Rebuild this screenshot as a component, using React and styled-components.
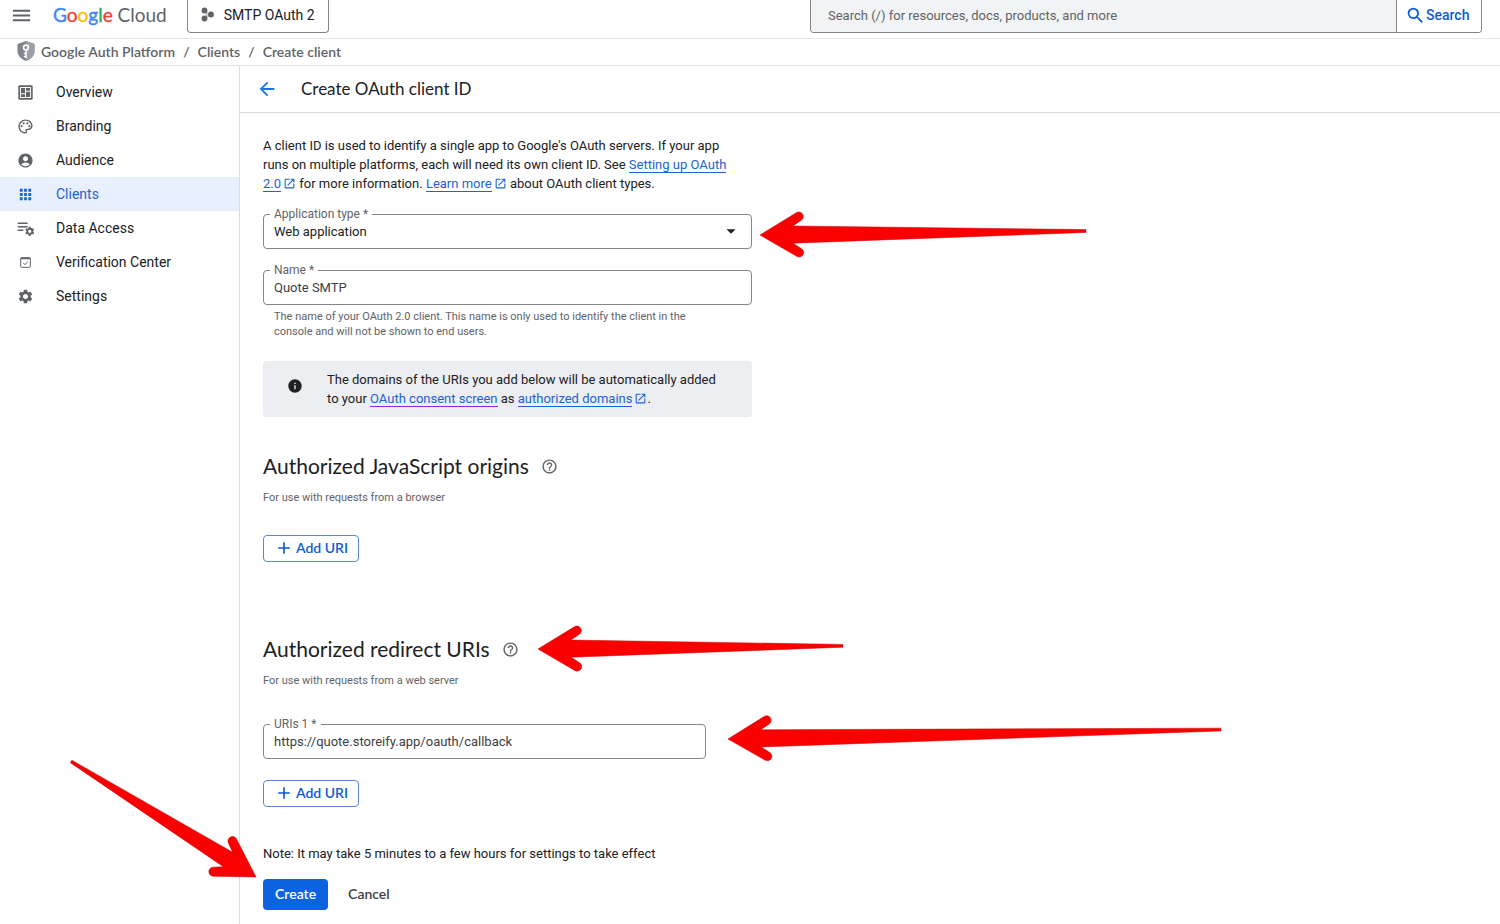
import React, { useState } from "react";
import styled, { createGlobalStyle } from "styled-components";
import {
  MdAccountCircle,
  MdAdd,
  MdApps,
  MdArrowBack,
  MdArrowDropDown,
  MdHelpOutline,
  MdInfo,
  MdMenu,
  MdOpenInNew,
  MdOutlinePalette,
  MdSearch,
  MdSettings,
} from "react-icons/md";

const bodyFont = `Roboto, "Liberation Sans", sans-serif`;
const titleFont = `Lato, Roboto, sans-serif`;

const GlobalStyle = createGlobalStyle`
  * {
    box-sizing: border-box;
  }

  body {
    margin: 0;
    background: #fff;
    color: #202124;
    font-family: ${bodyFont};
    font-size: 13px;
    line-height: 19px;
  }

  button,
  input,
  select {
    font: inherit;
    color: inherit;
  }
`;

const Page = styled.div`
  display: flex;
  flex-direction: column;
  min-height: 100vh;
  overflow: hidden;
`;

/* top bar */

const TopBar = styled.header`
  display: flex;
  align-items: flex-start;
  height: 39px;
  padding: 0 18px 0 10px;
  border-bottom: 1px solid #e4e6e9;
`;

const MenuButton = styled.button`
  display: flex;
  padding: 4px 0;
  border: none;
  background: none;
  color: #5f6368;
  font-size: 23px;
  cursor: pointer;
`;

const Logo = styled.a`
  margin-left: 20px;
  color: #5f6368;
  font-family: ${titleFont};
  font-size: 19px;
  line-height: 30px;
  text-decoration: none;
  white-space: nowrap;
`;

const LogoLetter = styled.span`
  color: ${({ $color }) => $color};
  -webkit-text-stroke: 0.4px ${({ $color }) => $color};
`;

const ProjectButton = styled.button`
  display: flex;
  align-items: center;
  gap: 8px;
  height: 33px;
  margin-left: 20px;
  padding: 0 13px 2px 12px;
  border: 1px solid #80868b;
  border-top: none;
  border-radius: 0 0 4px 4px;
  background: #fff;
  font-size: 14px;
  white-space: nowrap;
  cursor: pointer;
`;

const SearchBox = styled.form`
  display: flex;
  flex: 0 1 672px;
  height: 33px;
  margin-left: auto;
  border: 1px solid #80868b;
  border-top: none;
  border-radius: 0 0 4px 4px;
  overflow: hidden;
`;

const SearchInput = styled.input`
  flex: 1;
  min-width: 0;
  padding: 0 17px 2px;
  border: none;
  border-right: 1px solid #80868b;
  background: #f1f3f4;
  outline: none;

  &::placeholder {
    color: #5f6368;
    opacity: 1;
  }
`;

const SearchButton = styled.button`
  display: flex;
  align-items: center;
  width: 84px;
  padding: 0 0 2px 8px;
  border: none;
  background: #fff;
  color: #0f5bd2;
  font-size: 14px;
  font-weight: 500;
  cursor: pointer;

  svg {
    font-size: 21px;
  }
`;

const Breadcrumbs = styled.nav`
  display: flex;
  align-items: center;
  gap: 8px;
  height: 27px;
  padding: 0 17px 2px;
  border-bottom: 1px solid #e4e6e9;
  color: #5f6368;
  font-family: ${titleFont};
  font-size: 14px;
  font-weight: 600;

  a {
    color: inherit;
    text-decoration: none;
  }
`;

const Product = styled.a`
  display: flex;
  align-items: center;
  gap: 6px;
`;

/* side navigation */

const Columns = styled.div`
  display: flex;
  flex: 1;
`;

const Sidebar = styled.nav`
  flex: 0 0 240px;
  padding-top: 9px;
  border-right: 1px solid #dadce0;
`;

const NavItem = styled.a`
  display: flex;
  align-items: center;
  gap: 22px;
  height: 34px;
  padding-left: 17px;
  background: ${({ $active }) => ($active ? "#e8f0fe" : "transparent")};
  color: ${({ $active }) => ($active ? "#1f62d0" : "#202124")};
  font-size: 14px;
  text-decoration: none;

  svg {
    width: 17px;
    height: 17px;
    color: ${({ $active }) => ($active ? "#1f62d0" : "#5f6368")};
  }
`;

/* main column */

const Main = styled.main`
  flex: 1;
  min-width: 0;
`;

const TitleBar = styled.div`
  display: flex;
  align-items: center;
  gap: 23px;
  height: 47px;
  padding-left: 16px;
  border-bottom: 1px solid #dadce0;
`;

const BackButton = styled.button`
  display: flex;
  padding: 0;
  border: none;
  background: none;
  color: #1a73e8;
  font-size: 22px;
  cursor: pointer;
`;

const Title = styled.h1`
  margin: 0;
  font-family: ${titleFont};
  font-size: 17px;
  font-weight: 400;
  line-height: 24px;
`;

const Form = styled.form`
  max-width: 512px;
  padding: 23px 0 14px 23px;
`;

const Intro = styled.p`
  margin: 0 12px 21px 0;
`;

const Link = styled.a`
  color: #1f62d0;
  text-decoration: none;
  border-bottom: 1px solid ${({ $visited }) => ($visited ? "#8430ce" : "#1f62d0")};
`;

const ExternalIcon = styled(MdOpenInNew)`
  margin-left: 2px;
  color: #1f62d0;
  font-size: 13px;
  vertical-align: -2px;
`;

const FieldGroup = styled.div`
  display: grid;
  gap: 21px;
`;

const Field = styled.div`
  position: relative;
  width: ${({ $narrow }) => ($narrow ? "443px" : "100%")};

  input,
  select {
    display: block;
    width: 100%;
    height: 35px;
    padding: 0 10px 1px;
    border: 1px solid #80868b;
    border-radius: 4px;
    background: #fff;
    appearance: none;
    outline: none;
  }

  input {
    color: #3c4043;
  }
`;

const FieldLabel = styled.label`
  position: absolute;
  top: -8px;
  left: 7px;
  padding: 0 4px;
  background: #fff;
  color: #5f6368;
  font-size: 12px;
  line-height: 16px;
`;

const Caret = styled(MdArrowDropDown)`
  position: absolute;
  top: 6px;
  right: 10px;
  font-size: 22px;
  pointer-events: none;
`;

const Hint = styled.p`
  margin: 4px 40px 22px 11px;
  color: #5f6368;
  font-size: 11px;
  line-height: 15px;
`;

const Notice = styled.div`
  display: flex;
  gap: 24px;
  margin-bottom: 35px;
  padding: 9px 24px;
  border-radius: 4px;
  background: #eceef2;

  p {
    margin: 0;
  }

  > svg {
    flex: none;
    margin-top: 8px;
    font-size: 16px;
  }
`;

const Section = styled.section`
  margin-bottom: ${({ $last }) => ($last ? "37px" : "73px")};
`;

const SectionTitle = styled.h2`
  position: relative;
  display: flex;
  align-items: center;
  gap: 12px;
  width: fit-content;
  margin: 0;
  font-family: ${titleFont};
  font-size: 21px;
  font-weight: 400;
  line-height: 28px;
  white-space: nowrap;

  > svg {
    color: #5f6368;
    font-size: 17px;
  }
`;

const SectionNote = styled.p`
  margin: 10px 0 30px;
  color: #5f6368;
  font-size: 11px;
  line-height: 15px;
`;

const AddButton = styled.button`
  display: flex;
  align-items: center;
  gap: 2px;
  height: 27px;
  padding: 0 10px 2px;
  border: 1px solid #5b87d4;
  border-radius: 4px;
  background: #fff;
  color: #0f5bd2;
  font-family: ${titleFont};
  font-size: 14px;
  font-weight: 600;
  cursor: pointer;

  svg {
    font-size: 20px;
  }
`;

const UriList = styled.div`
  display: grid;
  gap: 21px;
  margin-top: 36px;
`;

const Note = styled.p`
  margin: 0 0 16px;
`;

const Actions = styled.div`
  position: relative;
  display: flex;
  align-items: center;
  gap: 8px;
`;

const ActionButton = styled.button`
  height: 31px;
  padding: 0 12px 2px;
  border: none;
  border-radius: 4px;
  background: ${({ $primary }) => ($primary ? "#0b63e0" : "transparent")};
  color: ${({ $primary }) => ($primary ? "#fff" : "#3c4043")};
  font-family: ${titleFont};
  font-size: 14px;
  font-weight: 600;
  cursor: pointer;
`;

/* red pointers laid over the page, the tip sits at the left centre */

const Pointer = styled.svg`
  position: absolute;
  top: ${({ $top }) => $top}px;
  left: ${({ $left }) => $left};
  overflow: visible;
  transform: rotate(${({ $angle }) => $angle}deg);
  transform-origin: 0 50%;
  pointer-events: none;
  z-index: 5;
`;

const Arrow = ({ length, angle, top, left }) => (
  <Pointer
    width={length}
    height="46"
    viewBox={`0 -23 ${length} 46`}
    $angle={angle}
    $top={top}
    $left={left}
    aria-hidden="true"
  >
    <path
      d={`M0 0L36.500 -21.800A4.500 4.500 0 0 1 41.500 -14.300L33 -8.600L${length} -1.400V1.400L33 8.600L41.500 14.300A4.500 4.500 0 0 1 36.500 21.800Z`}
      fill="#fa0000"
      stroke="#c80000"
      strokeWidth="0.5"
    />
  </Pointer>
);

const OverviewIcon = () => (
  <svg viewBox="-1 -1 26 26" fill="currentColor">
    <path
      fillRule="evenodd"
      d="M3 1h18a2 2 0 0 1 2 2v18a2 2 0 0 1-2 2H3a2 2 0 0 1-2-2V3a2 2 0 0 1 2-2zm.500 2.500v17h17v-17z"
    />
    <path d="M5 5h6.300v8H5zM12.700 5H19v4.500h-6.300zM12.700 11H19v8h-6.300zM5 14.500h6.300V19H5z" />
  </svg>
);

const DataAccessIcon = () => (
  <svg viewBox="0 0 24 24" fill="none" stroke="currentColor">
    <path d="M1 4.500h14M1 9.500h14M1 14.500h8" strokeWidth="2.200" />
    <circle cx="18" cy="16" r="3.600" strokeWidth="2.600" />
    <path
      d="M18 9.500v2.500M18 20v2.500M12.400 12.800l2 1.200M21.600 18l2 1.200M12.400 19.200l2-1.200M21.600 14l2-1.200"
      strokeWidth="3"
    />
  </svg>
);

const VerificationIcon = () => (
  <svg viewBox="-2 -2 28 28" fill="none" stroke="currentColor">
    <rect x="4" y="4" width="16" height="16" rx="1.500" strokeWidth="1.600" />
    <path d="M4 5.500h16" strokeWidth="2.400" />
    <path d="M8.500 13l2.500 2.500 5-5" strokeWidth="1.600" />
  </svg>
);

const ProjectIcon = () => (
  <svg width="16" height="16" viewBox="0 0 16 16" fill="#5f6368">
    <circle cx="4.500" cy="3.500" r="2.900" />
    <circle cx="4.500" cy="11.500" r="2.900" />
    <circle cx="11" cy="7.500" r="2.900" />
    <path d="M4 4h2l5 4-5 4H4l2-4z" opacity="0.35" />
  </svg>
);

const ShieldIcon = () => (
  <svg width="18" height="20" viewBox="0 0 18 20">
    <path d="M9 0l8.500 3v7c0 4.500-3.500 8-8.500 10C4 18 .500 14.500.500 10V3z" fill="#80868b" />
    <path d="M9 0l8.500 3v7c0 4.500-3.500 8-8.500 10z" fill="#9aa0a6" />
    <circle cx="9" cy="6.500" r="2.400" fill="none" stroke="#fff" strokeWidth="1.600" />
    <path d="M9 9v8M9 12.500H6.800M9 15.500H6.800" fill="none" stroke="#fff" strokeWidth="1.600" />
  </svg>
);

const logoLetters = [
  ["G", "#4285f4"],
  ["o", "#ea4335"],
  ["o", "#fbbc04"],
  ["g", "#4285f4"],
  ["l", "#34a853"],
  ["e", "#ea4335"],
];

const navItems = [
  { label: "Overview", Icon: OverviewIcon },
  { label: "Branding", Icon: MdOutlinePalette },
  { label: "Audience", Icon: MdAccountCircle },
  { label: "Clients", Icon: MdApps, active: true },
  { label: "Data Access", Icon: DataAccessIcon },
  { label: "Verification Center", Icon: VerificationIcon },
  { label: "Settings", Icon: MdSettings },
];

const Header = () => (
  <>
    <TopBar>
      <MenuButton aria-label="Main menu">
        <MdMenu />
      </MenuButton>
      <Logo href="#home">
        {logoLetters.map(([letter, color], i) => (
          <LogoLetter key={i} $color={color}>
            {letter}
          </LogoLetter>
        ))}{" "}
        Cloud
      </Logo>
      <ProjectButton>
        <ProjectIcon />
        SMTP OAuth 2
      </ProjectButton>
      <SearchBox onSubmit={(e) => e.preventDefault()}>
        <SearchInput
          aria-label="Search"
          placeholder="Search (/) for resources, docs, products, and more"
        />
        <SearchButton>
          <MdSearch />
          Search
        </SearchButton>
      </SearchBox>
    </TopBar>
    <Breadcrumbs>
      <Product href="#auth">
        <ShieldIcon />
        Google Auth Platform
      </Product>
      <span>/</span>
      <a href="#clients">Clients</a>
      <span>/</span>
      <a href="#create">Create client</a>
    </Breadcrumbs>
  </>
);

const ClientForm = () => {
  const [name, setName] = useState("Quote SMTP");
  const [uri, setUri] = useState("https://quote.storeify.app/oauth/callback");

  return (
    <Form onSubmit={(e) => e.preventDefault()}>
      <Intro>
        A client ID is used to identify a single app to Google's OAuth servers. If your app
        runs on multiple platforms, each will need its own client ID. See{" "}
        <Link href="#setup">Setting up OAuth 2.0</Link>
        <ExternalIcon /> for more information. <Link href="#more">Learn more</Link>
        <ExternalIcon /> about OAuth client types.
      </Intro>

      <FieldGroup>
        <Field>
          <select id="app-type" defaultValue="web">
            <option value="web">Web application</option>
          </select>
          <FieldLabel htmlFor="app-type">Application type *</FieldLabel>
          <Caret />
          <Arrow length={326} angle={-0.7} top={-2} left="calc(100% + 8px)" />
        </Field>
        <Field>
          <input id="name" value={name} onChange={(e) => setName(e.target.value)} />
          <FieldLabel htmlFor="name">Name *</FieldLabel>
        </Field>
      </FieldGroup>
      <Hint>
        The name of your OAuth 2.0 client. This name is only used to identify the client in the
        console and will not be shown to end users.
      </Hint>

      <Notice>
        <MdInfo />
        <p>
          The domains of the URIs you add below will be automatically added to your{" "}
          <Link href="#consent" $visited>
            OAuth consent screen
          </Link>{" "}
          as <Link href="#domains">authorized domains</Link>
          <ExternalIcon />.
        </p>
      </Notice>

      <Section>
        <SectionTitle>
          Authorized JavaScript origins
          <MdHelpOutline />
        </SectionTitle>
        <SectionNote>For use with requests from a browser</SectionNote>
        <AddButton type="button">
          <MdAdd />
          Add URI
        </AddButton>
      </Section>

      <Section $last>
        <SectionTitle>
          Authorized redirect URIs
          <MdHelpOutline />
          <Arrow length={305} angle={-0.6} top={-9} left="calc(100% + 19px)" />
        </SectionTitle>
        <SectionNote>For use with requests from a web server</SectionNote>
        <UriList>
          <Field $narrow>
            <input id="uri-1" value={uri} onChange={(e) => setUri(e.target.value)} />
            <FieldLabel htmlFor="uri-1">URIs 1 *</FieldLabel>
            <Arrow length={493} angle={-1.1} top={-8} left="calc(100% + 22px)" />
          </Field>
          <div>
            <AddButton type="button">
              <MdAdd />
              Add URI
            </AddButton>
          </div>
        </UriList>
      </Section>

      <Note>Note: It may take 5 minutes to a few hours for settings to take effect</Note>
      <Actions>
        <ActionButton $primary>Create</ActionButton>
        <ActionButton type="button">Cancel</ActionButton>
        <Arrow length={218} angle={212} top={-25} left="-7px" />
      </Actions>
    </Form>
  );
};

const App = () => (
  <>
    <GlobalStyle />
    <Page>
      <Header />
      <Columns>
        <Sidebar>
          {navItems.map(({ label, Icon, active }) => (
            <NavItem key={label} href="#nav" $active={active}>
              <Icon />
              {label}
            </NavItem>
          ))}
        </Sidebar>
        <Main>
          <TitleBar>
            <BackButton aria-label="Back">
              <MdArrowBack />
            </BackButton>
            <Title>Create OAuth client ID</Title>
          </TitleBar>
          <ClientForm />
        </Main>
      </Columns>
    </Page>
  </>
);

export default App;
